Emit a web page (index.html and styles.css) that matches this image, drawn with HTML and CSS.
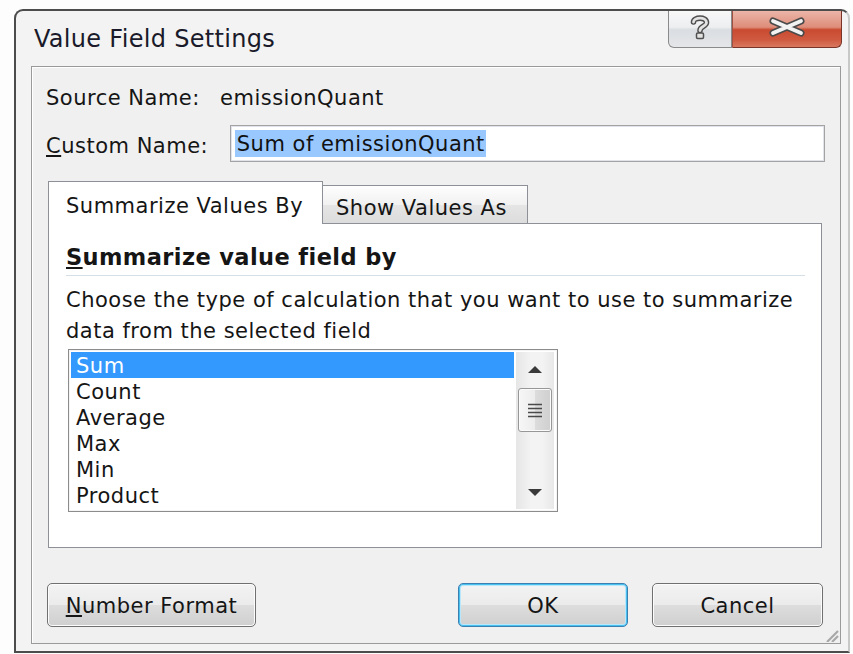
FILE: index.html
```html
<!DOCTYPE html>
<html lang="en">
<head>
<meta charset="utf-8">
<title>Value Field Settings</title>
<link rel="stylesheet" href="styles.css">
</head>
<body>
<div class="window">
  <div class="titlebar">
    <span class="title">Value Field Settings</span>
    <div class="caption-buttons">
      <div class="cap-btn help" title="Help">
        <svg width="22" height="26" viewBox="0 0 22 26">
          <path class="glyph-outline" d="M4.5 8 C4.5 3 17.5 2.5 17.5 8.5 C17.5 12.5 11 12 11 16.5" />
          <path class="glyph-fill" d="M4.5 8 C4.5 3 17.5 2.5 17.5 8.5 C17.5 12.5 11 12 11 16.5" />
          <rect x="7.5" y="19" width="7" height="5.5" rx="1.2" fill="#e2e2e2" stroke="#505050" stroke-width="1.5"/>
        </svg>
      </div>
      <div class="cap-btn close" title="Close">
        <svg width="42" height="20" viewBox="0 0 42 20">
          <path class="x-outline" d="M7 4 L35 16 M35 4 L7 16" />
          <path class="x-fill" d="M7 4 L35 16 M35 4 L7 16" />
        </svg>
      </div>
    </div>
  </div>

  <div class="client">
    <div class="field-row source-row">
      <span class="field-label source-label">Source Name:</span>
      <span class="field-value">emissionQuant</span>
    </div>

    <div class="field-row custom-row">
      <label class="field-label custom-label"><u>C</u>ustom Name:</label>
      <div class="textbox"><span class="selection">Sum of emissionQuant</span></div>
    </div>

    <div class="tab-control">
      <div class="tab-strip">
        <div class="tab tab-active">Summarize Values By</div>
        <div class="tab tab-inactive">Show Values As</div>
      </div>
      <div class="tab-panel">
        <div class="group-heading"><u>S</u>ummarize value field by</div>
        <p class="description">Choose the type of calculation that you want to use to summarize data from the selected field</p>
        <div class="listbox">
          <ul class="list-items">
            <li class="list-item selected">Sum</li>
            <li class="list-item">Count</li>
            <li class="list-item">Average</li>
            <li class="list-item">Max</li>
            <li class="list-item">Min</li>
            <li class="list-item">Product</li>
          </ul>
          <div class="scrollbar">
            <div class="scroll-arrow">
              <svg width="14" height="7" viewBox="0 0 14 7"><path d="M0 7 L7 0 L14 7 Z" fill="#3a3a3a"/></svg>
            </div>
            <div class="scroll-thumb">
              <svg width="16" height="16" viewBox="0 0 16 16">
                <path d="M1 2.5 H15 M1 6.5 H15 M1 10.5 H15 M1 14.5 H15" stroke="#4a4a4a" stroke-width="1.6"/>
              </svg>
            </div>
            <div class="scroll-track"></div>
            <div class="scroll-arrow">
              <svg width="14" height="7" viewBox="0 0 14 7"><path d="M0 0 L14 0 L7 7 Z" fill="#3a3a3a"/></svg>
            </div>
          </div>
        </div>
      </div>
    </div>

    <div class="button-row">
      <button class="btn btn-number"><u>N</u>umber Format</button>
      <button class="btn btn-ok">OK</button>
      <button class="btn btn-cancel">Cancel</button>
    </div>

    <svg class="size-grip" width="14" height="12" viewBox="0 0 14 12">
      <path d="M13 1 L2 12 M13 6 L7 12" stroke="#a8a8a8" stroke-width="2.2"/>
    </svg>
  </div>
</div>
</body>
</html>
```

FILE: styles.css
```css
* {
  box-sizing: border-box;
}

body {
  margin: 0;
  background: #fdfdfd;
  font-family: "DejaVu Sans", "Open Sans", sans-serif;
  font-size: 21px;
  letter-spacing: 0.5px;
  color: #151515;
  overflow: hidden;
}

/* ---------- window frame ---------- */
.window {
  position: relative;
  margin: 9px 0 0 14px;
  width: 836px;
  height: 644px;
  border: 2px solid #4c4c4c;
  border-right-color: #c8c8c8;
  border-radius: 9px 9px 0 0;
  background: #f3f3f3;
  padding: 0 7px 7px 15px;
  display: flex;
  flex-direction: column;
}

.titlebar {
  height: 55px;
  flex: none;
  display: flex;
  align-items: flex-start;
}

.title {
  margin: 13px 0 0 3px;
  font-size: 24px;
  letter-spacing: 0.3px;
  line-height: 30px;
  color: #1a1a2a;
}

.caption-buttons {
  position: absolute;
  top: 0;
  right: 6px;
  display: flex;
}

.cap-btn {
  height: 37px;
  display: flex;
  align-items: center;
  justify-content: center;
  padding-bottom: 4px;
  border: 1px solid #8a8a8a;
  border-top: none;
}

.help {
  width: 64px;
  border-radius: 0 0 0 6px;
  background: linear-gradient(#f8f8f8 0%, #eceef0 45%, #dadde1 52%, #e4e6e9 100%);
}

.close {
  width: 110px;
  border-color: #7a3528;
  border-left-color: #a05040;
  border-radius: 0 0 6px 0;
  background: linear-gradient(#ebb5a8 0%, #de8d7a 45%, #c94a30 52%, #cf5a40 80%, #d8785f 100%);
}

.glyph-outline {
  fill: none;
  stroke: #4e4e4e;
  stroke-width: 5.6;
  stroke-linecap: round;
}

.glyph-fill {
  fill: none;
  stroke: #e2e2e2;
  stroke-width: 2.8;
  stroke-linecap: round;
}

.x-outline {
  fill: none;
  stroke: #4a4a4a;
  stroke-width: 7;
  stroke-linecap: round;
}

.x-fill {
  fill: none;
  stroke: #f2f2f2;
  stroke-width: 3.8;
  stroke-linecap: round;
}

/* ---------- client area ---------- */
.client {
  position: relative;
  height: 578px;
  flex: none;
  border: 1px solid #9a9a9a;
  box-shadow: inset 1px 1px 0 #ffffff;
  background: #f0f0f0;
  padding: 0 15px 0 14px;
  display: flex;
  flex-direction: column;
}

.field-row {
  display: flex;
  align-items: center;
}

.source-row {
  margin-top: 17px;
  height: 26px;
  padding-top: 2px;
  line-height: 24px;
}

.source-label {
  width: 174px;
}

.custom-row {
  margin-top: 15px;
  height: 37px;
}

.custom-label {
  width: 184px;
  padding-top: 4px;
}

.textbox {
  width: 596px;
  height: 37px;
  background: #fff;
  border: 1px solid #a3a3a3;
  box-shadow: inset 0 0 0 1px #e2e3ea;
  padding: 4px 0 0 4px;
}

.selection {
  display: inline-block;
  height: 27px;
  line-height: 25px;
  padding: 2px 1px 0 2px;
  background: #99c8ff;
  color: #111;
}

/* ---------- tabs ---------- */
.tab-control {
  margin: 19px 0 0 2px;
  width: 774px;
}

.tab-strip {
  display: flex;
  align-items: flex-end;
  height: 42px;
}

.tab {
  border: 1px solid #8d9096;
  border-bottom: none;
  white-space: nowrap;
}

.tab-active {
  position: relative;
  z-index: 1;
  width: 275px;
  height: 43px;
  margin-bottom: -1px;
  background: #fff;
  padding: 11px 0 0 17px;
  line-height: 26px;
}

.tab-inactive {
  width: 206px;
  height: 38px;
  margin-left: -1px;
  background: linear-gradient(#fefefe 0%, #f1f1f1 50%, #e5e5e5 51%, #dcdcdc 100%);
  padding: 9px 0 0 13px;
  line-height: 26px;
}

.tab-panel {
  height: 325px;
  background: #fff;
  border: 1px solid #8d9096;
  padding: 0 16px 0 17px;
}

.group-heading {
  margin-top: 18px;
  padding: 2px 0 5px;
  line-height: 26px;
  font-weight: 700;
  font-size: 22.5px;
  letter-spacing: 0.4px;
  border-bottom: 1px solid #d5dfe5;
}

.description {
  margin: 9px 0 0;
  line-height: 31px;
}

/* ---------- list box ---------- */
.listbox {
  margin: 2px 0 0 2px;
  width: 490px;
  height: 163px;
  border: 1px solid #8c8c8c;
  box-shadow: inset 0 0 0 1px #f4f4f4;
  padding: 2px 3px 2px 2px;
  display: grid;
  grid-template-columns: 443px 1fr;
  column-gap: 2px;
  background: #fff;
}

.list-items {
  list-style: none;
  margin: 0;
  padding: 0;
}

.list-item {
  height: 26px;
  padding: 3px 0 0 5px;
  line-height: 23px;
}

.list-item.selected {
  background: #3399ff;
  color: #fff;
}

.scrollbar {
  display: flex;
  flex-direction: column;
  align-items: center;
  background: linear-gradient(90deg, #e6e6e6, #f3f3f3 40%, #f3f3f3 70%, #e8e8e8);
}

.scroll-arrow {
  height: 34px;
  display: flex;
  align-items: center;
  justify-content: center;
  flex: none;
}

.scroll-thumb {
  width: 34px;
  height: 44px;
  margin-top: 2px;
  flex: none;
  border: 1px solid #979797;
  border-radius: 3px;
  background: linear-gradient(90deg, #f6f6f6 0%, #ececec 50%, #dcdcdc 51%, #cfcfcf 100%);
  box-shadow: inset 0 0 0 1px #fbfbfb;
  display: flex;
  align-items: center;
  justify-content: center;
}

.scroll-track {
  flex: 1;
}

/* ---------- buttons ---------- */
.button-row {
  margin: 35px 2px 0 1px;
  display: flex;
  gap: 24px;
}

.btn {
  height: 44px;
  font-family: inherit;
  font-size: 21px;
  letter-spacing: 0.5px;
  color: #151515;
  border: 1px solid #707070;
  border-radius: 5px;
  background: linear-gradient(#f3f3f3 0%, #ebebeb 50%, #dddddd 51%, #cfcfcf 100%);
  box-shadow: inset 0 0 0 1px #fcfcfc;
  padding: 2px 0 0;
  line-height: 38px;
}

.btn-number {
  width: 209px;
  margin-right: auto;
}

.btn-ok {
  width: 170px;
  border-color: #3c7fb1;
  box-shadow: inset 0 0 0 1px #48c0ee, inset 0 0 0 2px #b8e6fb;
}

.btn-cancel {
  width: 171px;
}

.size-grip {
  position: absolute;
  right: 1px;
  bottom: 1px;
}
```
